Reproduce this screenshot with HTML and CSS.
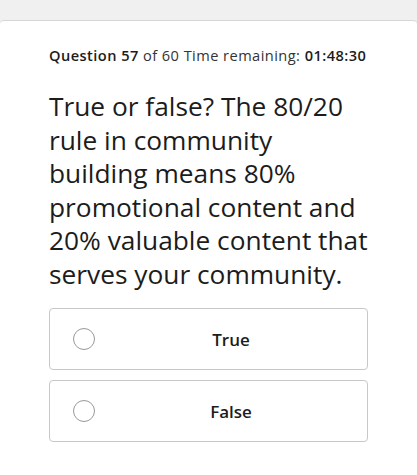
FILE: index.html
```html
<!DOCTYPE html>
<html lang="en">
<head>
    <meta charset="UTF-8">
    <meta name="viewport" content="width=device-width, initial-scale=1.0">
    <title>Quiz</title>
    <link rel="stylesheet" href="styles.css">
</head>
<body>

<div class="card">
    <!-- Progress and timer -->
    <p class="status">
        <b>Question 57</b> of 60 Time remaining: <b>01:48:30</b>
    </p>

    <h1 class="question">True or false? The 80/20 rule in community building means 80% promotional content and 20% valuable content that serves your community.</h1>

    <div class="options">
        <label class="option">
            <span class="radio"></span>
            <span class="option-text">True</span>
        </label>
        <label class="option">
            <span class="radio"></span>
            <span class="option-text">False</span>
        </label>
    </div>
</div>

</body>
</html>
```

FILE: styles.css
```css
body {
    font-family: "Open Sans", "Noto Sans", sans-serif;
    background-color: #f0f0f0;
    margin: 0;
    padding: 20px 0 0;
    color: #1c1c1c;
}
.card {
    background-color: #fff;
    border-top: 1px solid #d6d6d6;
    border-radius: 4px 4px 0 0;
    padding: 24px 49px 40px;
    min-height: 400px;
}
.status {
    margin: 0;
    font-size: 14.6px;
    letter-spacing: 0.45px;
    white-space: nowrap;
    color: #333;
}
.status b {
    color: #1c1c1c;
    font-weight: 600;
}
.question {
    margin: 25px 0 17px;
    font-size: 26.3px;
    font-weight: normal;
    line-height: 33.5px;
}
.options {
    display: flex;
    flex-direction: column;
    gap: 10px;
}
.option {
    display: flex;
    align-items: center;
    height: 60px;
    border: 1px solid #c8c8c8;
    border-radius: 4px;
    padding: 0 0 0 23px;
    cursor: pointer;
}
.radio {
    width: 22px;
    height: 22px;
    border: 1px solid #999;
    border-radius: 50%;
    box-sizing: border-box;
}
.option-text {
    flex: 1;
    text-align: center;
    font-size: 17px;
    font-weight: 600;
}
```
